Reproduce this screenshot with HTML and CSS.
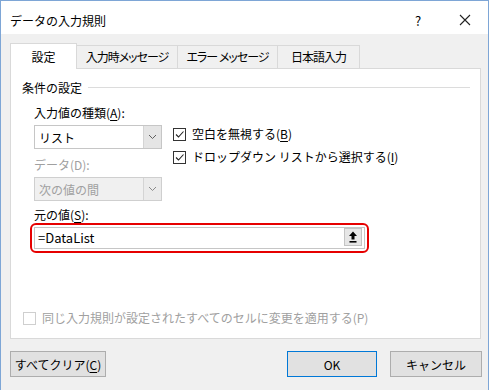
FILE: index.html
```html
<!DOCTYPE html>
<html lang="ja">
<head>
    <meta charset="UTF-8">
    <link rel="stylesheet" href="styles.css">
</head>
<body>
    <div class="window">
        <div class="titlebar">
            <span class="title">データの入力規則</span>
            <span class="help">?</span>
            <span class="close">
                <svg width="12" height="12" viewBox="0 0 12 12"><path d="M1 1L11 11M11 1L1 11" stroke="#222" stroke-width="1.1" fill="none"/></svg>
            </span>
        </div>

        <div class="client">
            <div class="tabs">
                <div class="tab active" style="width: 67px">設定</div>
                <div class="tab" style="width: 101px">入力時メッセージ</div>
                <div class="tab" style="width: 100px">エラー メッセージ</div>
                <div class="tab" style="width: 82px">日本語入力</div>
            </div>

            <div class="panel">
                <div class="group-title">条件の設定</div>

                <div class="criteria">
                    <div class="left-col">
                        <div class="label">入力値の種類(<u>A</u>):</div>
                        <div class="combo">
                            <span class="combo-text">リスト</span>
                            <span class="combo-btn">
                                <svg width="9" height="6" viewBox="0 0 9 6"><path d="M1 1L4.5 4.5L8 1" stroke="#606060" fill="none"/></svg>
                            </span>
                        </div>
                        <div class="label disabled">データ(D):</div>
                        <div class="combo is-disabled">
                            <span class="combo-text">次の値の間</span>
                            <span class="combo-btn">
                                <svg width="9" height="6" viewBox="0 0 9 6"><path d="M1 1L4.5 4.5L8 1" stroke="#8a8a8a" fill="none"/></svg>
                            </span>
                        </div>
                    </div>
                    <div class="right-col">
                        <label class="check">
                            <span class="box">
                                <svg width="11" height="11" viewBox="0 0 11 11"><path d="M2 5.5L4.5 8L9.5 2.5" stroke="#222" stroke-width="1.1" fill="none"/></svg>
                            </span>
                            空白を無視する(<u>B</u>)
                        </label>
                        <label class="check">
                            <span class="box">
                                <svg width="11" height="11" viewBox="0 0 11 11"><path d="M2 5.5L4.5 8L9.5 2.5" stroke="#222" stroke-width="1.1" fill="none"/></svg>
                            </span>
                            ドロップダウン リストから選択する(<u>I</u>)
                        </label>
                    </div>
                </div>

                <div class="label source-label">元の値(<u>S</u>):</div>
                <div class="highlight">
                    <div class="ref-input">
                        <span class="ref-text">=DataList</span>
                        <span class="ref-btn">
                            <svg width="10" height="12" viewBox="0 0 10 12"><path d="M5 0.5L9 5H6.5V8.5H3.5V5H1Z" fill="#000"/><rect x="1.5" y="10" width="7" height="1.6" fill="#000"/></svg>
                        </span>
                    </div>
                </div>

                <label class="check apply disabled">
                    <span class="box"></span>
                    同じ入力規則が設定されたすべてのセルに変更を適用する(P)
                </label>
            </div>

            <div class="buttons">
                <button class="btn clear">すべてクリア(<u>C</u>)</button>
                <span class="spacer"></span>
                <button class="btn ok">OK</button>
                <button class="btn cancel">キャンセル</button>
            </div>
        </div>
    </div>
</body>
</html>
```

FILE: styles.css
```css
body {
    margin: 0;
    background-color: #fff;
    font-family: "Noto Sans CJK JP", "Noto Sans", sans-serif;
    font-size: 12px;
    color: #000;
}

.window {
    width: 489px;
    height: 390px;
    box-sizing: border-box;
    border: 1px solid #7ea6d6;
    border-bottom: none;
    display: flex;
    flex-direction: column;
}

.titlebar {
    height: 33px;
    background-color: #fff;
    display: flex;
    align-items: center;
    padding-left: 9px;
}

.title {
    flex: 1;
    padding-top: 5px;
}

.help {
    width: 46px;
    text-align: center;
    font-size: 13px;
    padding-top: 5px;
    margin-right: 1px;
}

.close {
    width: 46px;
    display: flex;
    justify-content: center;
    padding-top: 5px;
}

.client {
    flex: 1;
    background-color: #f0f0f0;
    padding: 9px 0 0 9px;
}

/* tab strip */
.tabs {
    display: flex;
    align-items: flex-end;
    height: 25px;
    position: relative;
    z-index: 1;
}

.tab {
    height: 23px;
    box-sizing: border-box;
    border: 1px solid #d9d9d9;
    border-bottom: none;
    border-left: none;
    background-color: #f0f0f0;
    text-align: center;
    line-height: 22px;
    font-feature-settings: "palt";
    letter-spacing: -1px;
}

.tab.active {
    height: 26px;
    margin-bottom: -1px;
    border-left: 1px solid #d9d9d9;
    background-color: #fff;
    line-height: 26px;
    letter-spacing: 0;
}

.panel {
    width: 471px;
    height: 271px;
    box-sizing: border-box;
    border: 1px solid #d9d9d9;
    background-color: #fff;
    display: flex;
    flex-direction: column;
    padding: 10px 10px 11px 11px;
}

.group-title {
    display: flex;
    align-items: center;
    line-height: 18px;
}

.group-title::after {
    content: "";
    flex: 1;
    margin-left: 6px;
    border-top: 1px solid #dcdcdc;
    border-bottom: 1px solid #fff;
}

.label {
    line-height: 18px;
    padding-left: 12px;
}

.label u, .check u, .btn u {
    text-underline-offset: 2px;
}

.disabled {
    color: #a0a0a0;
}

.criteria {
    display: flex;
    margin-top: 7px;
}

.left-col {
    width: 140px;
}

.left-col .label + .combo {
    margin-top: 3px;
}

.left-col .combo + .label {
    margin-top: 7px;
}

.combo {
    margin-left: 12px;
    width: 128px;
    height: 24px;
    box-sizing: border-box;
    border: 1px solid #c6c6c6;
    background-color: #fff;
    display: flex;
    align-items: center;
}

.combo-text {
    flex: 1;
    padding-left: 4px;
}

.combo-btn {
    width: 17px;
    height: 100%;
    background-color: #e5e5e5;
    border-left: 1px solid #d4d4d4;
    display: flex;
    align-items: center;
    justify-content: center;
}

.combo.is-disabled {
    margin-top: 2px;
    background-color: #f0f0f0;
    border-color: #cfcfcf;
    color: #a0a0a0;
}

.combo.is-disabled .combo-btn {
    background-color: #ebebeb;
}

.right-col {
    padding-top: 21px;
    margin-left: 11px;
    display: flex;
    flex-direction: column;
    gap: 5px;
}

.check {
    display: flex;
    align-items: center;
    line-height: 18px;
}

.box {
    width: 13px;
    height: 13px;
    box-sizing: border-box;
    border: 1px solid #333;
    background-color: #fff;
    margin-right: 6px;
    display: flex;
    align-items: center;
    justify-content: center;
}

.source-label {
    margin-top: 6px;
    line-height: 16px;
}

.highlight {
    margin-left: 8px;
    width: 339px;
    box-sizing: border-box;
    border: 2px solid #e60000;
    border-radius: 6px;
    padding: 2px;
}

.ref-input {
    height: 22px;
    box-sizing: border-box;
    border: 1px solid #c6c6c6;
    display: flex;
    align-items: flex-start;
}

.ref-text {
    flex: 1;
    line-height: 20px;
    padding-left: 3px;
    font-size: 13px;
}

.ref-btn {
    width: 18px;
    height: 18px;
    box-sizing: border-box;
    margin-right: 2px;
    border: 1px solid #c4c4c4;
    background-color: #e6e6e6;
    display: flex;
    align-items: center;
    justify-content: center;
}

.check.apply {
    margin-top: auto;
    padding-left: 1px;
}

.check.apply .box {
    border-color: #cfcfcf;
}

/* bottom buttons */
.buttons {
    display: flex;
    width: 472px;
    margin-top: 12px;
    gap: 13px;
}

.spacer {
    flex: 1;
}

.btn {
    height: 26px;
    font-family: inherit;
    font-size: 12px;
    color: #000;
    background-color: #e1e1e1;
    border: 1px solid #adadad;
    padding: 0;
}

.btn.clear {
    width: 96px;
}

.btn.ok {
    width: 90px;
    border-color: #0078d7;
}

.btn.cancel {
    width: 92px;
}
```
